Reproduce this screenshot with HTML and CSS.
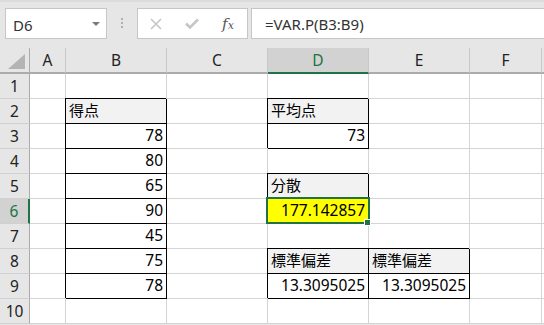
FILE: index.html
```html
<!DOCTYPE html>
<html lang="ja">
<head>
    <meta charset="UTF-8">
    <title>分散と標準偏差</title>
    <link rel="stylesheet" href="styles.css">
</head>
<body>
    <div class="bar">
        <div class="namebox">
            <span>D6</span>
            <span class="drop"></span>
        </div>
        <div class="grip"><i></i><i></i><i></i></div>
        <div class="fxbtns">
            <span class="btn">
                <svg width="12" height="12" viewBox="0 0 12 12"><path d="M1 1L11 11M11 1L1 11" stroke="#c6c6c6" stroke-width="1.6" fill="none"/></svg>
            </span>
            <span class="btn">
                <svg width="14" height="11" viewBox="0 0 14 11"><path d="M1 5.5L5 9.5L13 1.5" stroke="#c6c6c6" stroke-width="2.6" fill="none"/></svg>
            </span>
            <span class="btn fx"><i>f</i><i class="x">x</i></span>
        </div>
        <div class="formula">=VAR.P(B3:B9)</div>
    </div>

    <div class="sheet">
        <div class="corner"><svg width="17" height="15" viewBox="0 0 17 15"><path d="M17 0V15H0Z" fill="#b4b4b4"/></svg></div>
        <div class="col">A</div>
        <div class="col">B</div>
        <div class="col">C</div>
        <div class="col active">D</div>
        <div class="col">E</div>
        <div class="col">F</div>
        <div class="col edge"></div>

        <div class="row">1</div>
        <div class="cell"></div><div class="cell"></div><div class="cell"></div><div class="cell"></div><div class="cell"></div><div class="cell"></div><div class="cell edge"></div>

        <div class="row">2</div>
        <div class="cell"></div>
        <div class="cell box hd">得点</div>
        <div class="cell"></div>
        <div class="cell box hd">平均点</div>
        <div class="cell"></div><div class="cell"></div><div class="cell edge"></div>

        <div class="row">3</div>
        <div class="cell"></div>
        <div class="cell box num">78</div>
        <div class="cell"></div>
        <div class="cell box num">73</div>
        <div class="cell"></div><div class="cell"></div><div class="cell edge"></div>

        <div class="row">4</div>
        <div class="cell"></div>
        <div class="cell box num">80</div>
        <div class="cell"></div><div class="cell"></div><div class="cell"></div><div class="cell"></div><div class="cell edge"></div>

        <div class="row">5</div>
        <div class="cell"></div>
        <div class="cell box num">65</div>
        <div class="cell"></div>
        <div class="cell box hd">分散</div>
        <div class="cell"></div><div class="cell"></div><div class="cell edge"></div>

        <div class="row active">6</div>
        <div class="cell"></div>
        <div class="cell box num">90</div>
        <div class="cell"></div>
        <div class="cell box num hl selected">177.142857</div>
        <div class="cell"></div><div class="cell"></div><div class="cell edge"></div>

        <div class="row">7</div>
        <div class="cell"></div>
        <div class="cell box num">45</div>
        <div class="cell"></div><div class="cell"></div><div class="cell"></div><div class="cell"></div><div class="cell edge"></div>

        <div class="row">8</div>
        <div class="cell"></div>
        <div class="cell box num">75</div>
        <div class="cell"></div>
        <div class="cell box hd">標準偏差</div>
        <div class="cell box hd">標準偏差</div>
        <div class="cell"></div><div class="cell edge"></div>

        <div class="row">9</div>
        <div class="cell"></div>
        <div class="cell box num">78</div>
        <div class="cell"></div>
        <div class="cell box num">13.3095025</div>
        <div class="cell box num">13.3095025</div>
        <div class="cell"></div><div class="cell edge"></div>

        <div class="row">10</div>
        <div class="cell"></div><div class="cell"></div><div class="cell"></div><div class="cell"></div><div class="cell"></div><div class="cell"></div><div class="cell edge"></div>
    </div>
</body>
</html>
```

FILE: styles.css
```css
body {
    margin: 0;
    width: 544px;
    height: 325px;
    overflow: hidden;
    font-family: "Noto Sans", "Noto Sans CJK JP", sans-serif;
    background-color: #e6e6e6;
}

/* formula bar */
.bar {
    display: flex;
    align-items: flex-start;
    height: 48px;
    box-sizing: border-box;
    background-color: #e6e6e6;
    border-top: 2px solid #dcdcdc;
    padding-top: 6px;
}

.namebox, .fxbtns, .formula {
    height: 31px;
    box-sizing: border-box;
    background: #fff;
    border: 1px solid #c6c6c6;
}

.namebox {
    width: 102px;
    margin-left: 5px;
    display: flex;
    align-items: center;
    justify-content: space-between;
    padding: 2px 6px 0 7px;
    font-size: 15px;
    color: #333;
}

.drop {
    width: 0;
    height: 0;
    border-left: 4px solid transparent;
    border-right: 4px solid transparent;
    border-top: 4px solid #7a7a7a;
    margin-top: -2px;
}

.grip {
    width: 30px;
    display: flex;
    flex-direction: column;
    align-items: center;
    gap: 2px;
    padding-top: 10px;
}

.grip i {
    width: 2px;
    height: 2px;
    background: #b0b0b0;
}

.fxbtns {
    width: 111px;
    display: flex;
    align-items: center;
}

.btn {
    width: 36px;
    display: flex;
    justify-content: center;
    align-items: center;
}

.fx {
    font-family: "DejaVu Serif", "Liberation Serif", serif;
    font-size: 15px;
    color: #555;
}

.fx .x {
    font-size: 11px;
    margin-top: 4px;
}

.formula {
    flex: 1;
    margin-left: 3px;
    margin-right: -2px;
    padding: 3px 0 0 13px;
    font-size: 15px;
    line-height: 24px;
    color: #333;
}

/* sheet */
.sheet {
    display: grid;
    grid-template-columns: 30px 36px repeat(4, 101px) 72px 2px;
    grid-template-rows: 26px repeat(10, 25px);
    background: #fff;
}

.sheet > div {
    box-sizing: border-box;
}

.corner, .col {
    background: #e6e6e6;
    border-bottom: 2px solid #ababab;
}

.corner {
    border-right: 1px solid #ababab;
    display: flex;
    align-items: flex-end;
    padding: 0 0 3px 8px;
}

.col {
    border-right: 1px solid #c8c8c8;
    text-align: center;
    font-size: 15.5px;
    line-height: 24px;
    color: #222;
}

.col.active {
    background: #d2d2d2;
    color: #217346;
    border-bottom-color: #217346;
}

.col.edge {
    border-right: none;
}

.row {
    background: #e6e6e6;
    border-right: 1px solid #ababab;
    border-bottom: 1px solid #d0d0d0;
    text-align: center;
    font-size: 15.5px;
    line-height: 24px;
    color: #222;
}

.row.active {
    background: #d2d2d2;
    color: #217346;
    border-right: 2px solid #217346;
}

.cell {
    border-right: 1px solid #d4d4d4;
    border-bottom: 1px solid #d4d4d4;
    padding: 0 3px;
    font-size: 15px;
    line-height: 23px;
    color: #000;
    white-space: nowrap;
}

.cell.edge {
    border-right: none;
    padding: 0;
}

.box {
    border-right-color: #000;
    border-bottom-color: #000;
    box-shadow: -1px -1px 0 #000;
}

.hd {
    background: #f2f2f2;
}

.num {
    text-align: right;
    font-size: 15.5px;
}

.hl {
    background: #ffff00;
}

.selected {
    position: relative;
}

.selected::after {
    content: "";
    position: absolute;
    top: -2px;
    left: -2px;
    right: -2px;
    bottom: -1px;
    border: 2px solid #217346;
}

.selected::before {
    content: "";
    position: absolute;
    right: -3px;
    bottom: -3px;
    width: 5px;
    height: 5px;
    background: #217346;
    border: 1px solid #fff;
    z-index: 1;
}
```
